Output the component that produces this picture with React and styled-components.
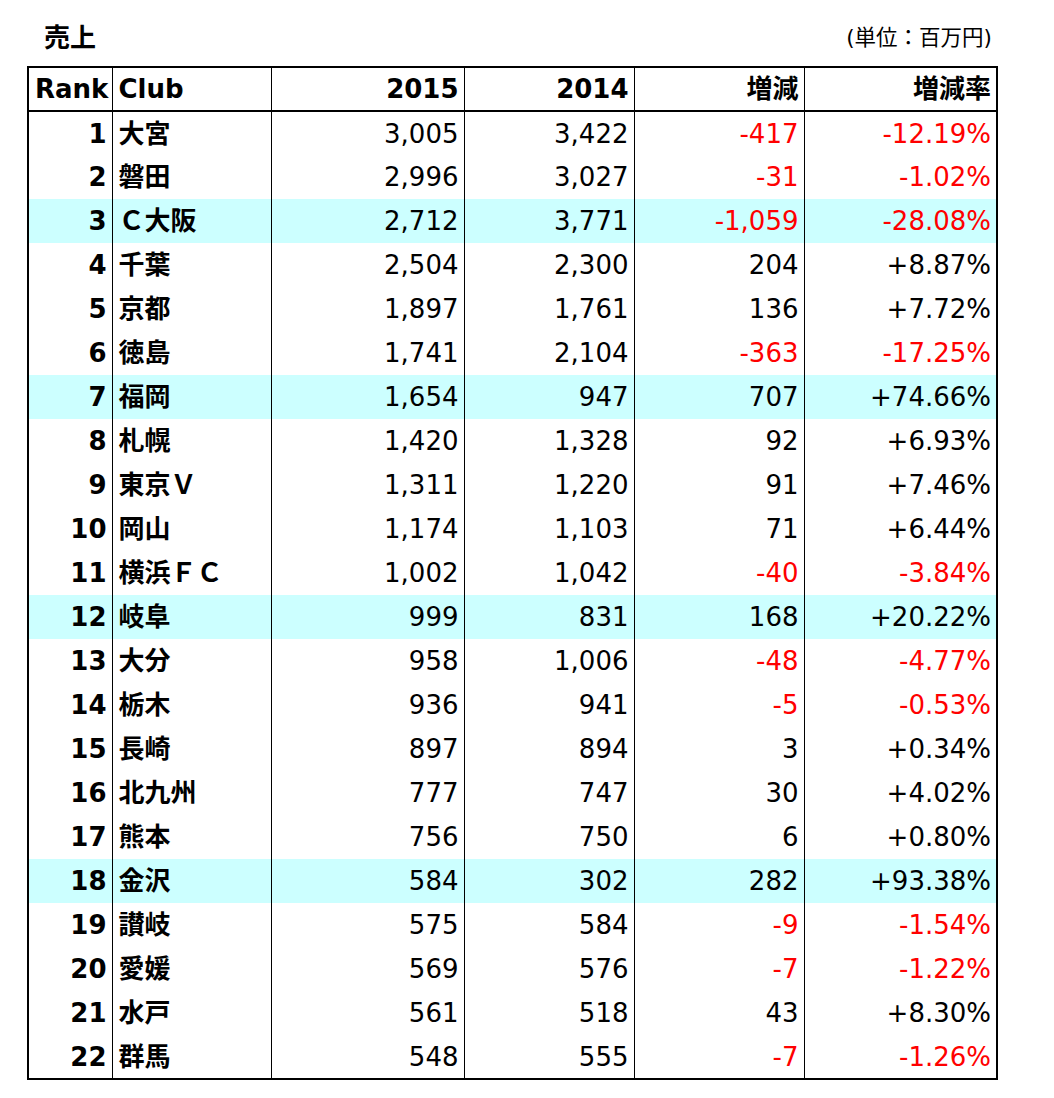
import React from "react";
import styled, { createGlobalStyle } from "styled-components";

const GlobalStyle = createGlobalStyle`
  html, body {
    margin: 0;
    padding: 0;
    background: #ffffff;
  }
  body {
    font-family: "DejaVu Sans", "Noto Sans CJK JP", sans-serif;
    color: #000000;
  }
`;

// rank, club, 2015, 2014, highlight
const rows = [
  [1, "大宮", 3005, 3422],
  [2, "磐田", 2996, 3027],
  [3, "Ｃ大阪", 2712, 3771, true],
  [4, "千葉", 2504, 2300],
  [5, "京都", 1897, 1761],
  [6, "徳島", 1741, 2104],
  [7, "福岡", 1654, 947, true],
  [8, "札幌", 1420, 1328],
  [9, "東京Ｖ", 1311, 1220],
  [10, "岡山", 1174, 1103],
  [11, "横浜ＦＣ", 1002, 1042],
  [12, "岐阜", 999, 831, true],
  [13, "大分", 958, 1006],
  [14, "栃木", 936, 941],
  [15, "長崎", 897, 894],
  [16, "北九州", 777, 747],
  [17, "熊本", 756, 750],
  [18, "金沢", 584, 302, true],
  [19, "讃岐", 575, 584],
  [20, "愛媛", 569, 576],
  [21, "水戸", 561, 518],
  [22, "群馬", 548, 555],
];

function comma(n) {
  const s = String(Math.abs(n)).replace(/\B(?=(\d{3})+(?!\d))/g, ",");
  return n < 0 ? "-" + s : s;
}

function rate(a, b) {
  const r = ((a - b) / b) * 100;
  const s = Math.abs(r).toFixed(2) + "%";
  return r < 0 ? "-" + s : "+" + s;
}

export default function App() {
  return (
    <Page>
      <GlobalStyle />
      <TitleBar>
        <Title>売上</Title>
        <Unit>(単位：百万円)</Unit>
      </TitleBar>
      <Table>
        <colgroup>
          <col style={{ width: 84 }} />
          <col style={{ width: 159 }} />
          <col style={{ width: 193 }} />
          <col style={{ width: 170 }} />
          <col style={{ width: 170 }} />
          <col style={{ width: 193 }} />
        </colgroup>
        <thead>
          <tr>
            <Head>Rank</Head>
            <Head $left>Club</Head>
            <Head>2015</Head>
            <Head>2014</Head>
            <Head>増減</Head>
            <Head>増減率</Head>
          </tr>
        </thead>
        <tbody>
          {rows.map(([rank, club, cur, prev, hl]) => {
            const diff = cur - prev;
            const neg = diff < 0;
            return (
              <Row key={rank} $hl={hl}>
                <RankCell>{rank}</RankCell>
                <ClubCell>{club}</ClubCell>
                <Num>{comma(cur)}</Num>
                <Num>{comma(prev)}</Num>
                <Num $neg={neg}>{comma(diff)}</Num>
                <Num $neg={neg}>{rate(cur, prev)}</Num>
              </Row>
            );
          })}
        </tbody>
      </Table>
    </Page>
  );
}

const Page = styled.div`
  width: 969px;
  padding: 0 0 0 27px;
`;

const TitleBar = styled.div`
  display: flex;
  justify-content: space-between;
  align-items: center;
  height: 66px;
  padding: 10px 4px 0 17px;
  box-sizing: border-box;
  line-height: 1;
`;

const Title = styled.div`
  font-size: 26px;
  font-weight: bold;
`;

const Unit = styled.div`
  font-size: 21.5px;
`;

const Table = styled.table`
  width: 969px;
  table-layout: fixed;
  border-collapse: collapse;
  border: 2px solid #000;
  font-size: 26px;
  line-height: 30px;
`;

const Head = styled.th`
  height: 42px;
  padding: 0 5px 0 6px;
  text-align: ${(p) => (p.$left ? "left" : "right")};
  font-weight: bold;
  border-left: 1px solid #000;
  border-bottom: 2px solid #000;
  white-space: nowrap;
  vertical-align: middle;
`;

const Row = styled.tr`
  background: ${(p) => (p.$hl ? "#ccffff" : "transparent")};
`;

const Cell = styled.td`
  height: 44px;
  padding: 0 5px 0 6px;
  border-left: 1px solid #000;
  white-space: nowrap;
  vertical-align: middle;
  box-sizing: border-box;
`;

const RankCell = styled(Cell)`
  text-align: right;
  font-weight: bold;
`;

const ClubCell = styled(Cell)`
  text-align: left;
  font-weight: bold;
`;

const Num = styled(Cell)`
  text-align: right;
  color: ${(p) => (p.$neg ? "#ff0000" : "#000000")};
`;
